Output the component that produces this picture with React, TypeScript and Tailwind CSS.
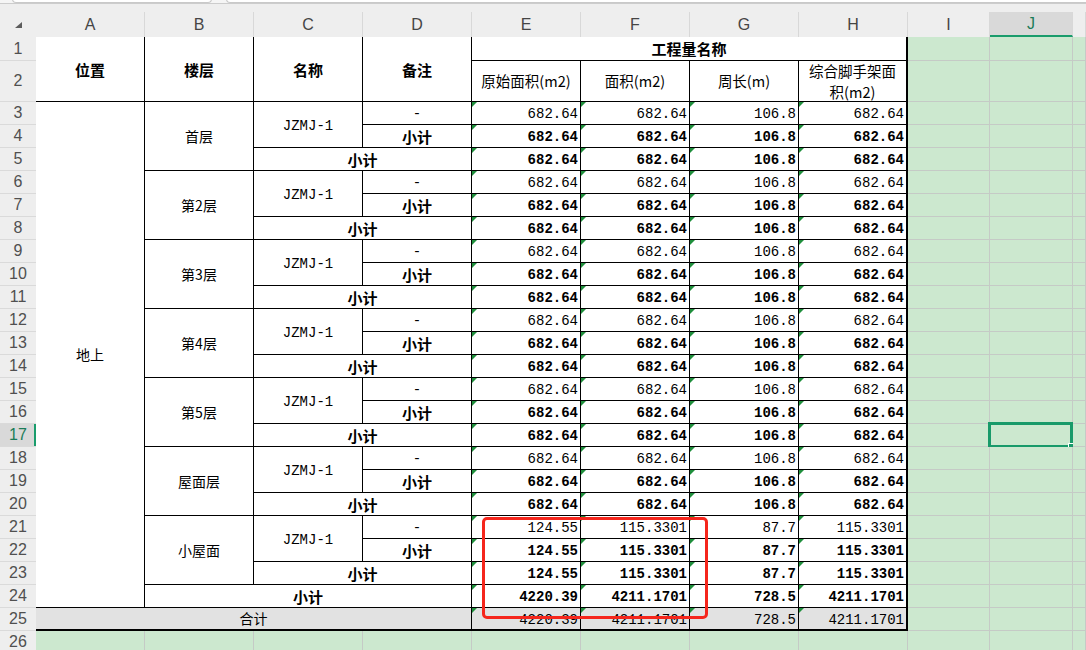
import React from "react";
import clsx from "clsx";

const COL_LETTERS = ["A", "B", "C", "D", "E", "F", "G", "H", "I", "J", "K"];

const groups = [
  { floor: "首层", v: ["682.64", "682.64", "106.8", "682.64"] },
  { floor: "第2层", v: ["682.64", "682.64", "106.8", "682.64"] },
  { floor: "第3层", v: ["682.64", "682.64", "106.8", "682.64"] },
  { floor: "第4层", v: ["682.64", "682.64", "106.8", "682.64"] },
  { floor: "第5层", v: ["682.64", "682.64", "106.8", "682.64"] },
  { floor: "屋面层", v: ["682.64", "682.64", "106.8", "682.64"] },
  { floor: "小屋面", v: ["124.55", "115.3301", "87.7", "115.3301"] },
];

const totals = ["4220.39", "4211.1701", "728.5", "4211.1701"];

const MONO = "font-['Liberation_Mono',monospace] text-[14px] pt-[3px]";
const CJK = "font-['Noto_Sans_CJK_SC',sans-serif]";

function RowHead({ n, active }: { n: number; active?: boolean }) {
  return (
    <div
      className={clsx(
        "relative flex items-center justify-center border-b border-[#dadada] font-['Liberation_Sans',Arial,sans-serif] text-[16px]",
        active ? "bg-[#d9d9d9] text-[#1b7c58]" : "bg-[#eeeeee] text-[#505050]"
      )}
    >
      {n}
      {active && <span className="absolute right-0 top-0 h-full w-[2px] bg-[#1a9c6c]" />}
    </div>
  );
}

function Green({ selected }: { selected?: boolean }) {
  return (
    <div className="relative bg-[#cce8cf] border-r border-b border-[#c5cac6]">
      {selected && (
        <>
          <span className="absolute -left-[2px] -top-[2px] w-[85px] h-[26px] border-[3px] border-[#189a6a]" />
          <span className="absolute left-[78px] top-[19px] w-[7px] h-[7px] bg-[#189a6a] border border-white" />
        </>
      )}
    </div>
  );
}

function Txt({
  children,
  span,
  kind = "cjk",
  gray,
  thickR,
}: {
  children: React.ReactNode;
  span?: string;
  kind?: "cjk" | "bold" | "mono";
  gray?: boolean;
  thickR?: boolean;
}) {
  return (
    <div
      className={clsx(
        "flex items-center justify-center text-center border-black text-black",
        span,
        thickR ? "border-r-2" : "border-r",
        gray ? "bg-[#e2e2e2] border-b-2" : "bg-white border-b",
        kind === "mono" && MONO,
        kind === "cjk" && `${CJK} text-[14px]`,
        kind === "bold" && `${CJK} text-[15px] font-bold pt-[2px]`
      )}
    >
      {children}
    </div>
  );
}

function Num({ v, col, bold, gray }: { v: string; col: number; bold?: boolean; gray?: boolean }) {
  return (
    <div
      className={clsx(
        "relative flex items-center justify-end pr-[2px] border-black text-black",
        MONO,
        col === 3 ? "border-r-2" : "border-r",
        gray ? "bg-[#e2e2e2] border-b-2" : "bg-white border-b",
        bold && "font-bold"
      )}
    >
      <span className="absolute left-0 top-0 w-0 h-0 border-t-[5px] border-r-[5px] border-t-[#1f8f3c] border-r-transparent" />
      {v}
    </div>
  );
}

export default function App() {
  const body: React.ReactNode[] = [];
  const greens = (r: number) => {
    body.push(<Green key={`i${r}`} />);
    body.push(<Green key={`j${r}`} selected={r === 17} />);
    body.push(<Green key={`k${r}`} />);
  };

  groups.forEach((g, gi) => {
    const r = 3 + gi * 3;
    // ligne détail
    body.push(<RowHead key={`h${r}`} n={r} active={r === 17} />);
    if (gi === 0)
      body.push(
        <Txt key="dishang" span="row-span-22">
          地上
        </Txt>
      );
    body.push(
      <Txt key={`b${r}`} span="row-span-3">
        {g.floor}
      </Txt>
    );
    body.push(
      <Txt key={`c${r}`} span="row-span-2" kind="mono">
        JZMJ-1
      </Txt>
    );
    body.push(
      <Txt key={`d${r}`} kind="mono">
        -
      </Txt>
    );
    g.v.forEach((v, i) => body.push(<Num key={`n${r}-${i}`} v={v} col={i} />));
    greens(r);

    // sous-total nom
    body.push(<RowHead key={`h${r + 1}`} n={r + 1} active={r + 1 === 17} />);
    body.push(
      <Txt key={`d${r + 1}`} kind="bold">
        小计
      </Txt>
    );
    g.v.forEach((v, i) => body.push(<Num key={`n${r + 1}-${i}`} v={v} col={i} bold />));
    greens(r + 1);

    // sous-total étage
    body.push(<RowHead key={`h${r + 2}`} n={r + 2} active={r + 2 === 17} />);
    body.push(
      <Txt key={`cd${r + 2}`} span="col-span-2" kind="bold">
        小计
      </Txt>
    );
    g.v.forEach((v, i) => body.push(<Num key={`n${r + 2}-${i}`} v={v} col={i} bold />));
    greens(r + 2);
  });

  return (
    <div className="relative w-[1086px] h-[650px] overflow-hidden bg-[#eeeeee]">
      {/* barre du haut */}
      <div className="h-[4px] bg-[#f5f5f5] border-b border-[#cccccc] flex pl-[12px] gap-[14px]">
        <div className="w-[200px] h-[4px] -mt-[1px] bg-white border-x border-b border-[#c9c9c9] rounded-b-[7px]" />
        <div className="flex-1 -mr-[20px] h-[4px] -mt-[1px] bg-white border-x border-b border-[#c9c9c9] rounded-b-[7px]" />
      </div>
      <div className="h-[8px]" />

      <div className="grid grid-cols-[36px_109px_109px_109px_109px_109px_109px_109px_109px_82px_83px_1fr] grid-rows-[25px_24px_41px_repeat(24,23px)]">
        {/* en-têtes de colonnes */}
        <div className="relative bg-[#eeeeee]">
          <svg className="absolute left-[15px] top-[10px]" width="7" height="6" viewBox="0 0 7 6">
            <polygon points="7,0 7,6 0,6" fill="#5c5c5c" />
          </svg>
        </div>
        {COL_LETTERS.map((c) => (
          <div
            key={c}
            className={clsx(
              "flex items-center justify-center border-r border-[#d8d8d8] font-['Liberation_Sans',Arial,sans-serif] text-[16px]",
              c === "J"
                ? "bg-[#d9d9d9] text-[#1b7c58] border-b-2 border-b-[#1a9c6c]"
                : "bg-[#eeeeee] text-[#454545]"
            )}
          >
            {c === "K" ? "" : c}
          </div>
        ))}

        {/* ligne 1 */}
        <RowHead n={1} />
        <Txt span="row-span-2" kind="bold">位置</Txt>
        <Txt span="row-span-2" kind="bold">楼层</Txt>
        <Txt span="row-span-2" kind="bold">名称</Txt>
        <Txt span="row-span-2" kind="bold">备注</Txt>
        <Txt span="col-span-4" kind="bold" thickR>
          工程量名称
        </Txt>
        <Green />
        <Green />
        <Green />

        {/* ligne 2 */}
        <RowHead n={2} />
        <div className={`flex items-center justify-center bg-white border-r border-b border-black text-black text-[14.5px] ${CJK}`}>
          原始面积(m2)
        </div>
        <div className={`flex items-center justify-center bg-white border-r border-b border-black text-black text-[14.5px] ${CJK}`}>
          面积(m2)
        </div>
        <div className={`flex items-center justify-center bg-white border-r border-b border-black text-black text-[14.5px] ${CJK}`}>
          周长(m)
        </div>
        <div className={`flex items-center justify-center text-center leading-[21px] bg-white border-r-2 border-b border-black text-black text-[14.5px] ${CJK}`}>
          综合脚手架面
          <br />
          积(m2)
        </div>
        <Green />
        <Green />
        <Green />

        {body}

        {/* ligne 24 */}
        <RowHead n={24} />
        <Txt span="col-span-3" kind="bold">
          小计
        </Txt>
        {totals.map((v, i) => (
          <Num key={`t24-${i}`} v={v} col={i} bold />
        ))}
        <Green />
        <Green />
        <Green />

        {/* ligne 25 */}
        <RowHead n={25} />
        <Txt span="col-span-4" gray>
          合计
        </Txt>
        {totals.map((v, i) => (
          <Num key={`t25-${i}`} v={v} col={i} gray />
        ))}
        <Green />
        <Green />
        <Green />

        {/* ligne 26 */}
        <RowHead n={26} />
        {COL_LETTERS.map((c) => (
          <Green key={`g26${c}`} />
        ))}
      </div>

      {/* encadré rouge */}
      <div className="absolute left-[482px] top-[517px] w-[226px] h-[102px] border-[3px] border-[#f5261c] rounded-[5px]" />
    </div>
  );
}
